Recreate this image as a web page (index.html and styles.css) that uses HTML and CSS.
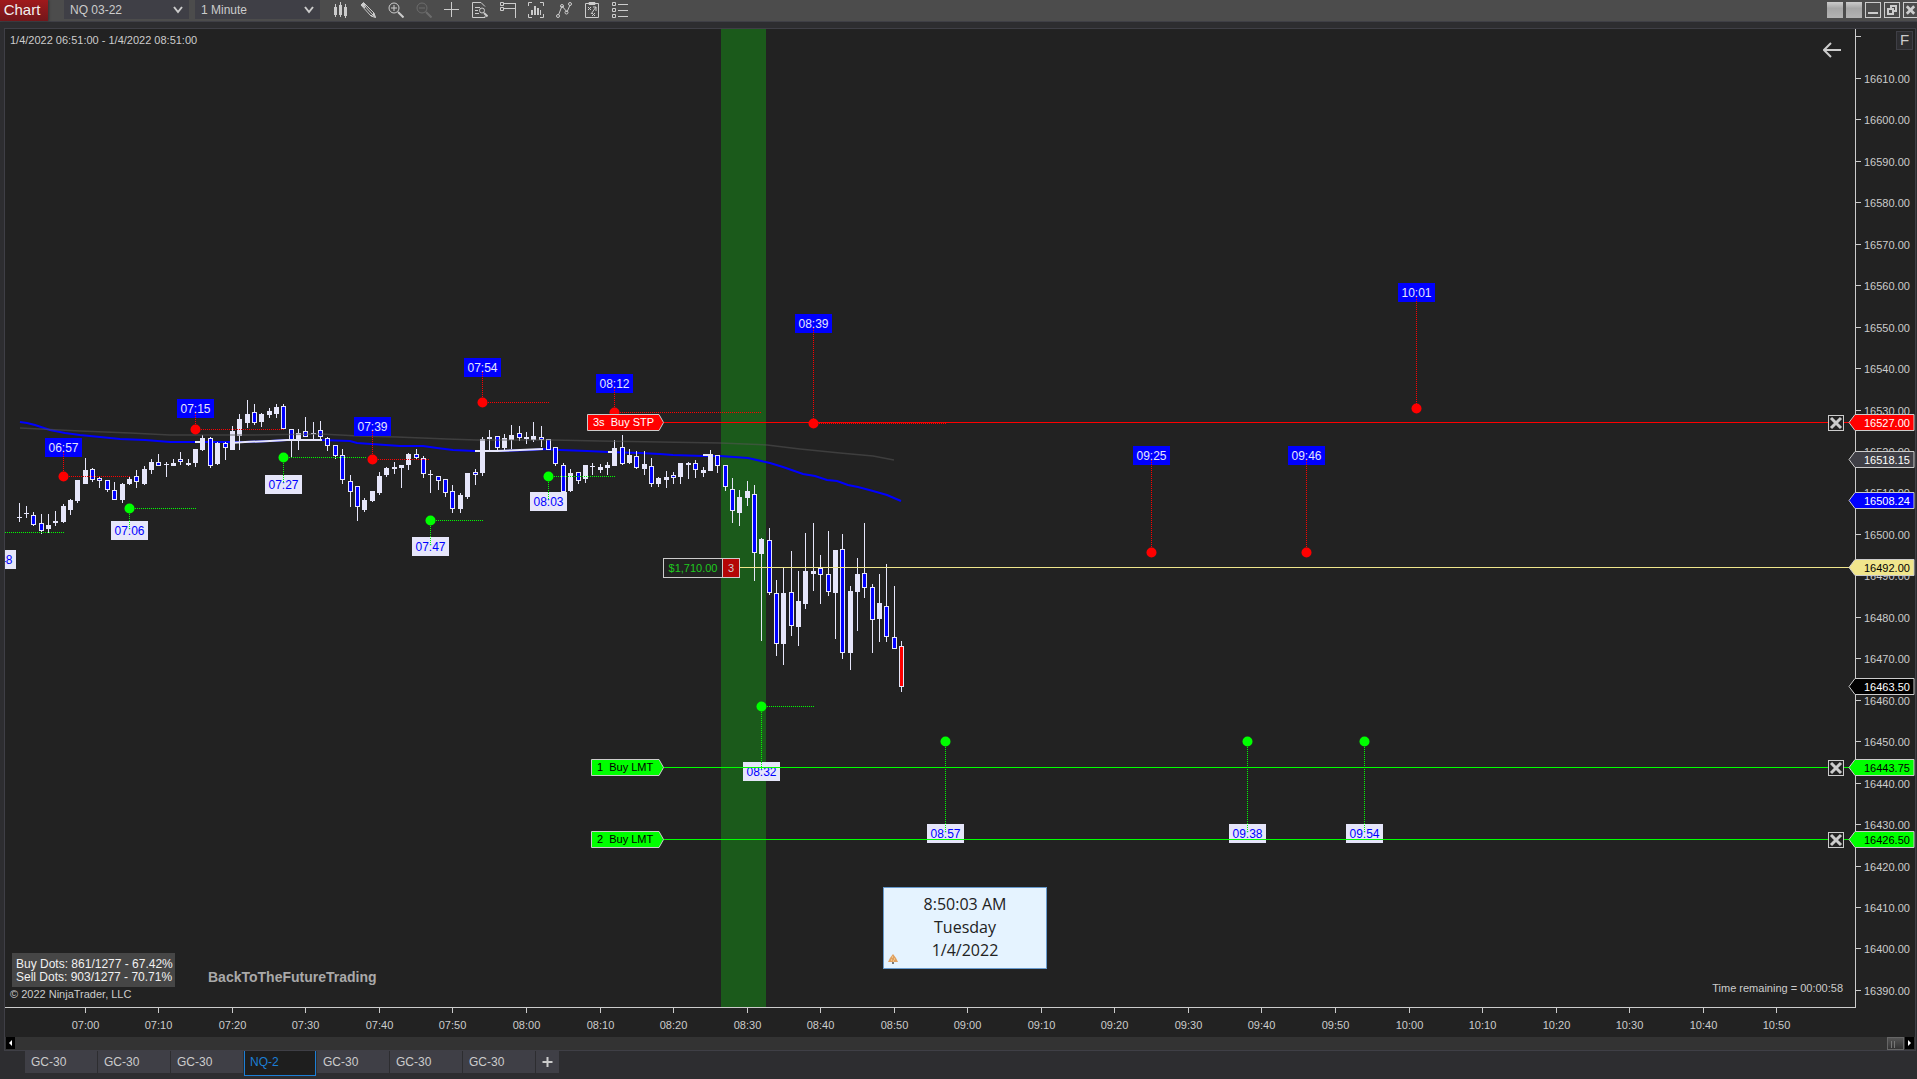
FILE: index.html
```html
<!DOCTYPE html>
<html lang="en">
<head>
<meta charset="utf-8">
<title>Chart - NQ 03-22</title>
<link rel="stylesheet" href="styles.css">
</head>
<body>
<header class="toolbar">
  <button class="chart-menu" type="button">Chart</button>
  <div class="picker">
    <select class="picker-select" aria-label="Instrument"><option>NQ 03-22</option></select>
    <svg class="picker-arrow" viewBox="0 0 10 8"><path d="M1 1l4 5 4-5"/></svg>
  </div>
  <div class="picker">
    <select class="picker-select" aria-label="Interval"><option>1 Minute</option></select>
    <svg class="picker-arrow" viewBox="0 0 10 8"><path d="M1 1l4 5 4-5"/></svg>
  </div>
  <nav class="tools">
    <button class="tool" type="button" aria-label="Chart style"><svg viewBox="0 0 16 16"><path d="M3.5 2v13M8.500 0v15M13.500 2v14"/><path class="fill" d="M2 5h3v8H2zM7 3h3v10H7zM12 5h3v9h-3z"/></svg></button>
    <button class="tool" type="button" aria-label="Drawing tools"><svg viewBox="0 0 16 16"><path d="M1 3l2.500-2.500L14 11l1.500 4.500L11 14zM2.500 1.500l10 11M4 6l3-3M11 14l3-3"/><path class="fill" d="M1 3l2.500-2.500L6 3 3.500 5.500zM12 13l2-2 2 5z"/></svg></button>
    <button class="tool" type="button" aria-label="Zoom in"><svg viewBox="0 0 16 16"><circle cx="6" cy="6" r="5"/><path d="M3 6h6M6 3v6"/><path class="thick" d="M10 10l5.500 5.500"/></svg></button>
    <button class="tool tool-off" type="button" aria-label="Zoom out" disabled><svg viewBox="0 0 16 16"><circle cx="6" cy="6" r="5"/><path d="M3 6h6"/><path class="thick" d="M10 10l5.500 5.500"/></svg></button>
    <button class="tool" type="button" aria-label="Crosshair"><svg viewBox="0 0 16 16"><path d="M0 7.500h15M7.500 0v15"/></svg></button>
    <button class="tool" type="button" aria-label="Data box"><svg viewBox="0 0 16 16"><path d="M13 4.500L9 .5H.5v15H13V14M3 5.500h5M3 8.500h3M3 11.500h4"/><circle cx="10" cy="8.500" r="2.500"/><path class="thick" d="M12 11l3.500 3.500"/></svg></button>
    <button class="tool" type="button" aria-label="Chart trader"><svg viewBox="0 0 16 16"><path d="M.5.5h3v3h-3zM.5 5.500h3v3h-3zM4 1.500h12M4 6.500h11M15.500 1v15"/></svg></button>
    <button class="tool" type="button" aria-label="Data series"><svg viewBox="0 0 16 16"><path d="M.5 4V.5H4M12 .5h3.500V4M.5 12v3.500H4M12 15.500h3.500V12"/><path class="fill" d="M3 8h2v5H3zM6 4h2v9H6zM9 6h2v7H9zM12 8h1v5h-1z"/></svg></button>
    <button class="tool" type="button" aria-label="Indicators"><svg viewBox="0 0 16 16"><path d="M2.500 13L6 4l5 6 3-7"/><circle cx="2" cy="14" r="1.500"/><circle cx="6" cy="4" r="1.500"/><circle cx="10.500" cy="10.500" r="1.500"/><circle cx="14" cy="2" r="1.500"/></svg></button>
    <button class="tool" type="button" aria-label="Strategies"><svg viewBox="0 0 16 16"><path d="M1.500 1.500h13v14h-13zM5 .5h6v2H5zM4 5l3 3M7 5L4 8M8 11l3 3M11 11l-3 3M12 5v4M9 5h3L7 12"/></svg></button>
    <button class="tool" type="button" aria-label="Properties"><svg viewBox="0 0 16 16"><path d="M.5.5h3v3h-3zM.5 6.500h3v3h-3zM.5 12.500h3v3h-3zM6 2.500h10M6 8.500h10M6 14.500h10"/></svg></button>
  </nav>
  <div class="window-controls">
    <button class="link-box" type="button" aria-label="Instrument link"></button>
    <button class="link-box" type="button" aria-label="Interval link"></button>
    <button class="window-button" type="button" aria-label="Minimize"><svg viewBox="0 0 14 14"><path class="thick" d="M2 10h10"/></svg></button>
    <button class="window-button" type="button" aria-label="Restore"><svg viewBox="0 0 14 14"><path class="thick" d="M3 6h5v5H3zM6 5V3h5v5H9"/></svg></button>
    <button class="window-button window-close" type="button" aria-label="Close"><svg viewBox="0 0 14 14"><path class="cross" d="M3 3l8 8M11 3l-8 8"/></svg></button>
  </div>
</header>

<main class="panel">
  <section class="chart">
    <div class="plot">
      <svg class="canvas" id="plot"></svg>
      <p class="range">1/4/2022 06:51:00 - 1/4/2022 08:51:00</p>
      <button class="back" type="button" aria-label="Scroll back"><svg viewBox="0 0 18 16"><path d="M18 8H1M8 1L1 8l7 7"/></svg></button>
      <div class="position"><span class="position-pnl">$1,710.00</span><span class="position-size">3</span></div>
      <button class="cancel cancel-stop" type="button" aria-label="Cancel stop order"><svg viewBox="0 0 14 14"><path class="cross" d="M2 2l10 10M12 2L2 12"/></svg></button>
      <button class="cancel cancel-first" type="button" aria-label="Cancel first limit order"><svg viewBox="0 0 14 14"><path class="cross" d="M2 2l10 10M12 2L2 12"/></svg></button>
      <button class="cancel cancel-second" type="button" aria-label="Cancel second limit order"><svg viewBox="0 0 14 14"><path class="cross" d="M2 2l10 10M12 2L2 12"/></svg></button>
      <div class="clock">
        <span>8:50:03 AM</span><span>Tuesday</span><span>1/4/2022</span>
        <svg class="clock-icon" viewBox="0 0 10 11"><path d="M5 0l3 4 2 4H0l2-4z" fill="#e0a060"/><path d="M4 8h2v2H4z" fill="#777"/><path d="M4 3h1M6 5h1M3 6h1M5 7h1" stroke="#fbe7b0"/></svg>
      </div>
      <footer class="notes">
        <div class="notes-left">
          <p class="stats">Buy Dots: 861/1277 - 67.42%<br>Sell Dots: 903/1277 - 70.71%</p>
          <p class="copyright">© 2022 NinjaTrader, LLC</p>
        </div>
        <p class="brand">BackToTheFutureTrading</p>
        <p class="remaining">Time remaining = 00:00:58</p>
      </footer>
    </div>
    <div class="prices">
      <svg class="canvas" id="prices"></svg>
      <button class="fixed-scale" type="button">F</button>
    </div>
  </section>
  <svg class="times" id="times"></svg>
  <div class="scrollbar">
    <button class="scroll-step" type="button" aria-label="Scroll left"><svg viewBox="0 0 9 12"><path class="fill" d="M6 3v6L3 6z"/></svg></button>
    <div class="scroll-track"><span class="scroll-thumb"></span></div>
    <button class="scroll-step" type="button" aria-label="Scroll right"><svg viewBox="0 0 9 12"><path class="fill" d="M3 3v6l3-3z"/></svg></button>
  </div>
</main>

<nav class="tabs">
  <button class="tab" type="button">GC-30</button>
  <button class="tab" type="button">GC-30</button>
  <button class="tab" type="button">GC-30</button>
  <button class="tab tab-active" type="button">NQ-2</button>
  <button class="tab" type="button">GC-30</button>
  <button class="tab" type="button">GC-30</button>
  <button class="tab" type="button">GC-30</button>
  <button class="tab-add" type="button" aria-label="New tab"><svg viewBox="0 0 10 10"><path d="M0 5h10M5 0v10"/></svg></button>
</nav>
<script src="chart.js"></script>
</body>
</html>
```
FILE: styles.css
```css
* { box-sizing: border-box; }

html, body { height: 100%; }

body {
  margin: 0;
  display: flex;
  flex-direction: column;
  background: #2d2d30;
  color: #ccc;
  font: 12px/14px "Liberation Sans", Arial, sans-serif;
  overflow: hidden;
}

p { margin: 0; }

button, select {
  margin: 0;
  padding: 0;
  border: 0;
  border-radius: 0;
  background: none;
  color: inherit;
  font: inherit;
}

svg { display: block; }

button svg, .picker-arrow {
  fill: none;
  stroke: #ccc;
  stroke-width: 1;
}

button svg { width: 100%; height: 100%; }
button svg .fill { fill: #ccc; stroke: none; }
button svg .thick { stroke-width: 2; }
button svg .cross { stroke-width: 3; }

/* Toolbar */

.toolbar {
  display: flex;
  align-items: flex-start;
  flex: none;
  height: 22px;
  background: #4c4c4c;
  border-bottom: 1px solid #3f3f46;
}

.chart-menu {
  width: 48px;
  height: 21px;
  margin-right: 16px;
  padding: 0 4px 2px 0;
  background: linear-gradient(#a0191c, #72171b);
  box-shadow: 1px 0 2px #333;
  color: #f1f1f1;
  font-size: 15px;
}

.picker {
  display: flex;
  align-items: center;
  width: 125px;
  height: 19px;
  margin-right: 6px;
  background: #3f3f46;
}

.picker-select {
  appearance: none;
  flex: 1;
  height: 19px;
  padding-left: 6px;
}

.picker-arrow {
  flex: none;
  width: 10px;
  height: 8px;
  margin-right: 6px;
  stroke-width: 2;
  pointer-events: none;
}

.tools {
  display: flex;
  gap: 12px;
  padding: 2px 0 0 6px;
}

.tool { width: 16px; height: 16px; }
.tool-off { opacity: 0.25; }

.window-controls {
  display: flex;
  gap: 3px;
  margin-left: auto;
  padding-top: 2px;
}

.link-box {
  width: 16px;
  height: 16px;
  background: linear-gradient(#ccc, #a6a6a6 40%, #b4b4b4);
}

.window-button {
  width: 16px;
  height: 16px;
  border: 1px solid #ccc;
}

.window-close {
  width: 14px;
  border-right: 0;
}

/* Chart panel */

.panel {
  display: flex;
  flex-direction: column;
  flex: 1;
  min-height: 0;
  margin: 6px 1px 0 4px;
  border: 1px solid #3f3f46;
  background: #222;
}

.chart {
  display: grid;
  grid-template-columns: 1fr 60px;
  flex: 1;
  min-height: 0;
}

.plot, .prices { position: relative; min-width: 0; }

.plot { border-bottom: 1px solid #ccc; }
.prices { border-left: 1px solid #ccc; }

.canvas {
  position: absolute;
  inset: 0;
  width: 100%;
  height: 100%;
}

.prices .canvas { overflow: visible; }

text { font: 11px "Liberation Sans", Arial, sans-serif; fill: #ccc; white-space: pre; }
text.dot-time { font-size: 12px; text-anchor: middle; }
.crisp { shape-rendering: crispEdges; }
.dotted { stroke-dasharray: 1 1; shape-rendering: crispEdges; }

.range {
  position: absolute;
  left: 5px;
  top: 4px;
  font-size: 11px;
}

.back {
  position: absolute;
  right: 14px;
  top: 13px;
  width: 18px;
  height: 16px;
}

.back svg { stroke-width: 2; }

.position {
  position: absolute;
  left: 658px;
  top: 529px;
  display: flex;
  width: 77px;
  height: 20px;
  border: 1px solid #ccc;
  background: #222;
  font-size: 11px;
  line-height: 18px;
  text-align: center;
}

.position-pnl { flex: 1; color: #1ec81e; }

.position-size {
  width: 17px;
  border-left: 1px solid #ccc;
  background: #b40606;
}

.cancel {
  position: absolute;
  right: 11px;
  width: 16px;
  height: 16px;
  border: 1px solid #ccc;
  background: #222;
}

.cancel-stop { top: 386px; }
.cancel-first { top: 731px; }
.cancel-second { top: 803px; }

.clock {
  position: absolute;
  left: 878px;
  top: 858px;
  display: flex;
  flex-direction: column;
  width: 164px;
  padding: 5px 0 6px;
  border: 1px solid #6699cc;
  background: #e5f3ff;
  color: #222;
  font: 16px/23px "Open Sans", "Noto Sans", sans-serif;
  text-align: center;
}

.clock-icon {
  position: absolute;
  left: 4px;
  bottom: 3px;
  width: 10px;
  height: 11px;
}

.notes {
  position: absolute;
  left: 5px;
  right: 12px;
  bottom: 6px;
  display: flex;
  align-items: flex-end;
  font-size: 11px;
}

.stats {
  width: 163px;
  margin-left: 2px;
  padding: 5px 0 3px 4px;
  background: #464646;
  color: #f1f1f1;
  font-size: 12px;
  line-height: 13px;
  white-space: nowrap;
}

.brand {
  margin-left: 33px;
  padding-bottom: 14px;
  color: #a9a9a9;
  font: bold 14px/20px "Liberation Sans Narrow", "Liberation Sans", sans-serif;
}

.remaining { margin-left: auto; padding-bottom: 6px; }

.fixed-scale {
  position: absolute;
  right: 2px;
  top: 2px;
  width: 17px;
  height: 19px;
  padding-bottom: 2px;
  border: 1px solid #3f3f46;
  background: #2d2d30;
  font-size: 15px;
}

.times {
  flex: none;
  width: 100%;
  height: 29px;
}

.scrollbar {
  display: flex;
  flex: none;
  height: 13px;
  padding: 0 1px;
  background: #333;
}

.scroll-step { width: 9px; height: 12px; background: #000; }
.scroll-step svg .fill { fill: #fff; }

.scroll-track { display: flex; flex: 1; justify-content: flex-end; }

.scroll-thumb {
  width: 17px;
  margin-right: 1px;
  border: 1px solid #666;
  background:
    linear-gradient(#777, #777) 3px 3px / 1px 7px no-repeat,
    linear-gradient(#777, #777) 6px 3px / 1px 7px no-repeat,
    linear-gradient(#555, #333);
}

/* Workspace tabs */

.tabs {
  display: flex;
  align-items: flex-start;
  gap: 1px;
  flex: none;
  height: 28px;
  padding-left: 25px;
}

.tab {
  width: 72px;
  height: 22px;
  padding-left: 6px;
  background: #3f3f46;
  text-align: left;
}

.tab-active {
  height: 25px;
  padding: 0 0 2px 5px;
  border: 1px solid #1c7fd6;
  border-top: 0;
  background: #1e1e1e;
  color: #1c7fd6;
}

.tab-add {
  width: 23px;
  height: 22px;
  padding: 6px;
  background: #3f3f46;
}

.tab-add svg { stroke-width: 2; }
```
FILE: chart.js
```js
const NS = "http://www.w3.org/2000/svg";

function add(parent, name, attrs, text) {
  const el = document.createElementNS(NS, name);
  for (const key in attrs) el.setAttribute(key, attrs[key]);
  if (text !== undefined) el.textContent = text;
  parent.appendChild(el);
  return el;
}

const plot = document.getElementById("plot");
const prices = document.getElementById("prices");
const times = document.getElementById("times");

// Plot coordinates: one bar per minute, first bar at 06:51.
const barX = (i) => Math.floor(14.1 + 7.354 * i);
const priceY = (p) => Math.floor(49.4 + (16610 - p) * 4.1455);
const minutes = (t) => Number(t.slice(0, 2)) * 60 + Number(t.slice(3));
const timeX = (t) => barX(minutes(t) - 411);

const UP = "#e6e6fa", BLUE = "#0000ff", RED = "#ff0000", GREEN = "#00ff00", KHAKI = "#f0e68c";

// high, low, body top, body bottom, colour (w = up, b = down, r = current)
const BAR_TOP = 351;
const bars = `123,142,137,138,w 126,138,133,134,w 132,146,135,145,b 134,154,143,151,b 134,153,145,149,w 131,146,141,143,w
124,143,126,142,w 119,135,120,130,w 100,123,100,121,w 78,104,90,104,w 88,102,89,100,b 96,108,98,101,b 100,112,100,110,b
102,120,110,120,b 103,123,104,120,w 97,105,99,104,w 90,108,96,102,b 86,105,89,104,w 79,94,82,90,w 74,86,82,86,b
82,97,84,85,w 79,86,83,86,w 72,85,79,82,b 79,86,83,85,w 69,87,69,83,w 55,71,58,70,w 57,88,58,86,b 62,85,63,84,w
62,80,63,68,b 46,70,51,70,w 34,70,39,56,w 20,48,34,43,w 24,45,32,43,b 33,47,34,42,w 28,38,31,35,w 24,38,27,34,w
24,49,26,49,b 49,78,49,60,b 49,70,53,60,w 37,57,51,57,b 42,60,53,54,w 41,59,50,57,b 57,71,58,66,b 65,79,65,76,b
69,104,75,100,b 95,127,101,112,b 106,141,106,127,b 118,132,120,130,w 111,122,111,121,w 92,115,96,113,w 87,97,88,95,w
82,94,87,89,w 85,108,85,88,w 73,90,74,85,w 69,80,74,78,b 76,98,78,94,b 90,113,94,95,w 96,110,96,101,b 99,117,99,113,b
105,133,111,129,b 113,133,115,129,w 93,119,93,117,w 89,105,92,95,b 57,96,59,93,w 50,70,57,59,w 56,70,56,68,b
54,70,58,68,w 45,69,55,60,w 46,61,53,58,b 52,64,57,59,w 42,62,56,60,w 46,67,57,60,b 59,70,59,70,b 67,86,67,84,b
83,112,85,112,b 89,112,93,111,w 92,104,92,101,b 85,103,85,99,w 83,95,86,87,w 84,93,87,90,w 82,95,85,88,w
60,86,68,86,w 55,85,67,84,b 69,84,75,83,w 71,89,76,88,b 71,95,84,89,w 78,107,86,104,b 97,107,98,104,w 91,108,97,100,w
92,104,95,98,b 83,104,83,97,w 82,99,83,85,w 80,98,83,90,b 87,97,90,93,w 70,91,74,91,w 75,93,75,86,b 85,111,85,107,b
98,143,109,131,b 110,146,117,133,w 101,126,111,118,w 105,201,114,173,b 158,261,159,174,w 148,215,160,213,b
200,276,213,264,b 188,285,213,264,w 171,256,212,246,b 191,266,221,247,w 153,229,191,224,w 143,211,191,194,w
175,224,188,195,b 151,216,194,212,b 170,259,170,213,w 154,279,169,273,b 206,290,211,273,w 178,251,194,212,w
143,218,193,208,b 204,273,207,240,b 194,262,223,239,w 184,262,226,257,b 206,269,257,269,b 261,312,266,307,r`
  .split(/\s+/).map((row) => row.split(","));

const slowAverage = "15,399 75,402 125,404 165,406 245,406 315,405 355,407 392,408 442,410 472,411 548,411 595,412 655,413 715,414 762,416 795,420 835,424 868,427 889,431";
const fastAverage = "15,393 22,394 30,396 45,401 60,404 75,406 95,408 115,410 140,411 165,413 195,413 225,413 240,413 265,412 282,411 315,411 345,412 352,414 395,417 418,417 432,419 448,421 470,422 492,422 528,421 538,420 555,421 582,422 603,423 635,424 655,425 668,426 698,427 715,427 743,429 765,434 778,438 798,445 810,447 822,451 832,452 843,456 853,458 868,462 882,466 896,472";
const risingAverage = ["190,413 198,413", "225,414 240,413 265,412 282,411 317,411", "470,422 492,422 515,421 538,420", "603,423 610,423", "698,426 708,426"];

// time, side, dot y, label top, end of the dotted level line
const signals = [
  ["06:57", "sell", 447, 409, 125], ["07:15", "sell", 400, 370, 279], ["07:39", "sell", 430, 388, 425],
  ["07:54", "sell", 373, 329, 544], ["08:12", "sell", 383, 345, 757], ["08:39", "sell", 394, 285, 941],
  ["09:25", "sell", 523, 417, 0], ["09:46", "sell", 523, 417, 0], ["10:01", "sell", 379, 254, 0],
  ["06:48", "buy", 503, 521, 59], ["07:06", "buy", 479, 492, 191], ["07:27", "buy", 428, 446, 362],
  ["07:47", "buy", 491, 508, 478], ["08:03", "buy", 447, 463, 610], ["08:32", "buy", 677, 733, 809],
  ["08:57", "buy", 712, 795, 0], ["09:38", "buy", 712, 795, 0], ["09:54", "buy", 712, 795, 0]
];

const orders = [
  { y: 393, x: 582, text: "3s  Buy STP", color: RED, ink: "#fff" },
  { y: 738, x: 586, text: "1  Buy LMT", color: GREEN, ink: "#000" },
  { y: 810, x: 586, text: "2  Buy LMT", color: GREEN, ink: "#000" }
];

const markers = [
  [393, "16527.00", RED, "#fff"], [430, "16518.15", "#3f3f46", "#fff"], [471, "16508.24", BLUE, "#fff"],
  [538, "16492.00", KHAKI, "#000"], [657, "16463.50", "#000", "#fff"], [738, "16443.75", GREEN, "#000"],
  [810, "16426.50", GREEN, "#000"]
];

function drawBars() {
  add(plot, "rect", { x: 716, y: 0, width: 45, height: "100%", fill: "#1b5a1b" });
  add(plot, "polyline", { points: fastAverage, fill: "none", stroke: BLUE, "stroke-width": 2 });
  risingAverage.forEach((points) => add(plot, "polyline", { points, fill: "none", stroke: UP, "stroke-width": 2 }));
  bars.forEach(([high, low, top, bottom, kind], i) => {
    const x = barX(i);
    add(plot, "rect", { x, y: BAR_TOP + +high, width: 1, height: low - high, fill: UP });
    add(plot, "rect", { x: x - 2, y: BAR_TOP + +top, width: 5, height: bottom - top, fill: UP });
    if (kind !== "w") {
      add(plot, "rect", { x: x - 1, y: BAR_TOP + +top + 1, width: 3, height: bottom - top - 2, fill: kind === "b" ? BLUE : RED });
    }
  });
  add(plot, "polyline", { points: slowAverage, fill: "none", stroke: "#555", "stroke-opacity": 0.55, "stroke-width": 1.5 });
}

function drawSignals() {
  signals.forEach(([time, side, y, top, end]) => {
    const x = timeX(time), color = side === "sell" ? RED : GREEN;
    add(plot, "rect", { x: x - 18, y: top, width: 37, height: 19, fill: side === "sell" ? BLUE : UP });
    add(plot, "text", { x: x + 0.5, y: top + 14, class: "dot-time", style: "fill:" + (side === "sell" ? UP : BLUE) }, time);
    const tip = side === "sell" ? top + 14 : top + 8;
    add(plot, "line", { x1: x + 0.5, y1: Math.min(y, tip), x2: x + 0.5, y2: Math.max(y, tip), stroke: color, class: "dotted" });
    if (end) add(plot, "line", { x1: x, y1: y + 0.5, x2: end, y2: y + 0.5, stroke: color, class: "dotted" });
    add(plot, "circle", { cx: x + 0.5, cy: y + 0.5, r: 5, fill: color });
  });
}

function drawOrders() {
  add(plot, "line", { x1: 735, y1: 538.5, x2: "100%", y2: 538.5, stroke: KHAKI, class: "crisp" });
  orders.forEach(({ y, x, text, color, ink }) => {
    add(plot, "line", { x1: 659, y1: y + 0.5, x2: "100%", y2: y + 0.5, stroke: color, class: "crisp" });
    add(plot, "polygon", { points: `${x + 0.5},${y - 7.5} 654,${y - 7.5} 658.5,${y + 0.5} 654,${y + 8.5} ${x + 0.5},${y + 8.5}`, fill: color, stroke: "#ccc" });
    add(plot, "text", { x: x + 6, y: y + 4, style: "fill:" + ink }, text);
  });
}

function drawPrices() {
  for (let price = 16620; price >= 16390; price -= 10) {
    const y = priceY(price);
    add(prices, "line", { x1: 0, y1: y + 0.5, x2: 5, y2: y + 0.5, stroke: "#ccc", class: "crisp" });
    if (price < 16620) add(prices, "text", { x: 8, y: y + 5 }, price.toFixed(2));
  }
  markers.forEach(([y, text, fill, ink]) => {
    add(prices, "polygon", { points: `-7,${y + 0.5} -1,${y - 7.5} 58,${y - 7.5} 58,${y + 8.5} -1,${y + 8.5}`, fill, stroke: "#ccc" });
    add(prices, "text", { x: 8, y: y + 5, style: "fill:" + ink }, text);
  });
}

function drawTimes() {
  for (let m = 420; m <= 650; m += 10) {
    const label = String(Math.floor(m / 60)).padStart(2, "0") + ":" + String(m % 60).padStart(2, "0");
    const x = timeX(label);
    add(times, "line", { x1: x + 0.5, y1: 0, x2: x + 0.5, y2: 5, stroke: "#ccc", class: "crisp" });
    add(times, "text", { x: x + 0.5, y: 21, "text-anchor": "middle" }, label);
  }
}

drawBars();
drawSignals();
drawOrders();
drawPrices();
drawTimes();
```
